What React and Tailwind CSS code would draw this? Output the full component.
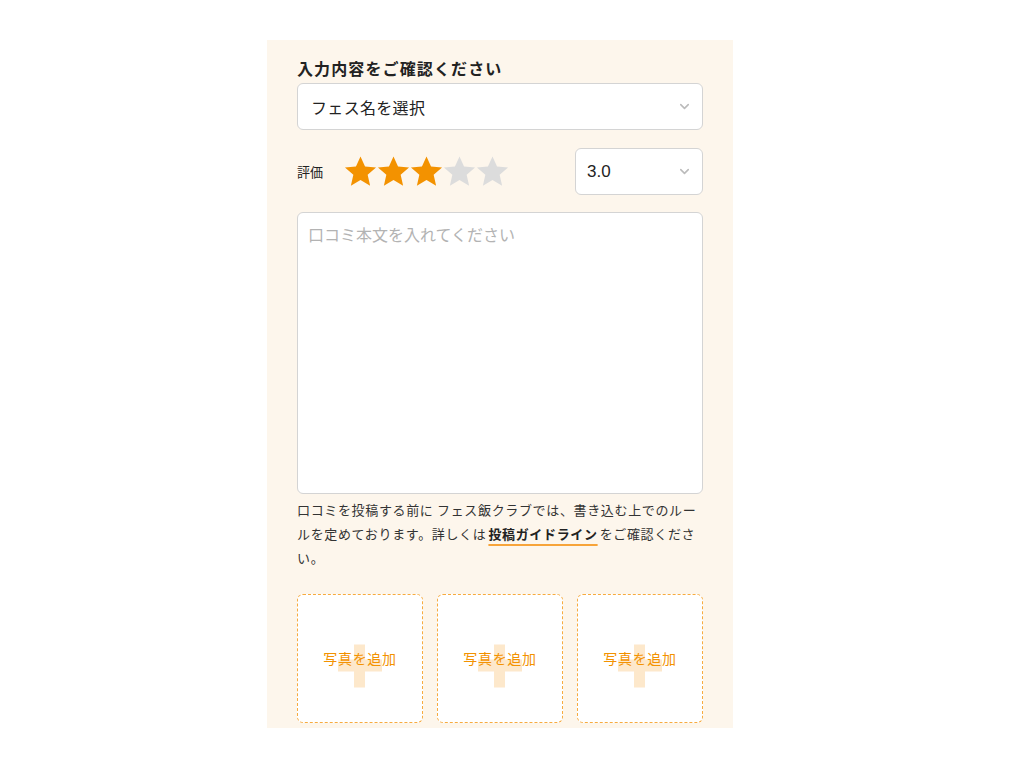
import { ChevronDown } from 'lucide-react';

const Star = ({ on }) => (
  <svg viewBox="0 0 24 24" className="w-[33px] h-[33px]">
    <path
      d="M12 1l3.3 7.4 8 .7-6.1 5.3 1.8 7.9L12 18.2l-7 4.1 1.8-7.9-6.1-5.3 8-.7z"
      fill={on ? '#f39200' : '#dcdcdc'}
    />
  </svg>
);

const PhotoBox = () => (
  <div className="relative h-[129px] rounded-md border border-dashed border-[#f7ab3f] bg-white flex items-center justify-center">
    <div className="absolute left-1/2 top-1/2 -translate-x-1/2 -translate-y-1/2 mt-[7px] w-[44px] h-[43px]">
      <div className="absolute left-[16px] top-0 w-[11px] h-full bg-[#fde8cb]" />
      <div className="absolute top-[15px] left-0 h-[12px] w-full bg-[#fde8cb]" />
    </div>
    <span className="relative text-[14px] tracking-[0.05em] text-[#f39200]">写真を追加</span>
  </div>
);

export default function App() {
  return (
    <div className="min-h-screen bg-white pt-[40px] font-['Noto_Sans_CJK_JP',sans-serif]">
      <div className="ml-[267px] w-[466px] h-[688px] bg-[#fdf6ec] px-[30px] pt-[16px]">
        <h2 className="text-[16px] font-bold text-[#222] leading-[24px] tracking-[0.07em]">入力内容をご確認ください</h2>

        <div className="mt-[3px] h-[47px] rounded-md border border-[#d4d4d4] bg-white flex items-center justify-between pl-[13px] pr-[10px]">
          <span className="text-[16px] text-[#222] tracking-[0.02em]">フェス名を選択</span>
          <ChevronDown className="w-[15px] h-[15px] text-[#bbb]" strokeWidth={2.5} />
        </div>

        <div className="mt-[18px] flex items-center h-[47px]">
          <span className="text-[13px] text-[#222] w-[47px]">評価</span>
          <div className="flex">
            <Star on />
            <Star on />
            <Star on />
            <Star />
            <Star />
          </div>
          <div className="ml-auto w-[128px] h-[47px] rounded-md border border-[#d4d4d4] bg-white flex items-center justify-between pl-[11px] pr-[10px]">
            <span className="text-[17px] text-[#222] font-['Liberation_Sans',sans-serif]">3.0</span>
            <ChevronDown className="w-[15px] h-[15px] text-[#bbb]" strokeWidth={2.5} />
          </div>
        </div>

        <textarea
          className="mt-[17px] block w-full h-[282px] rounded-md border border-[#d4d4d4] bg-white px-[10px] py-[9px] text-[16px] text-[#222] placeholder-[#b3b3b3] resize-none outline-none"
          placeholder="口コミ本文を入れてください"
        />

        <p className="mt-[4px] text-[13px] leading-[24px] text-[#333] tracking-[0.05em]">
          口コミを投稿する前に フェス飯クラブでは、書き込む上でのルールを定めております。詳しくは
          <a className="mx-[2px] font-bold text-[#222] underline decoration-[#f7a43a] decoration-[1.5px] underline-offset-[5px]">投稿ガイドライン</a>
          をご確認ください。
        </p>

        <div className="mt-[24px] grid grid-cols-3 gap-[14px]">
          <PhotoBox />
          <PhotoBox />
          <PhotoBox />
        </div>
      </div>
    </div>
  );
}
